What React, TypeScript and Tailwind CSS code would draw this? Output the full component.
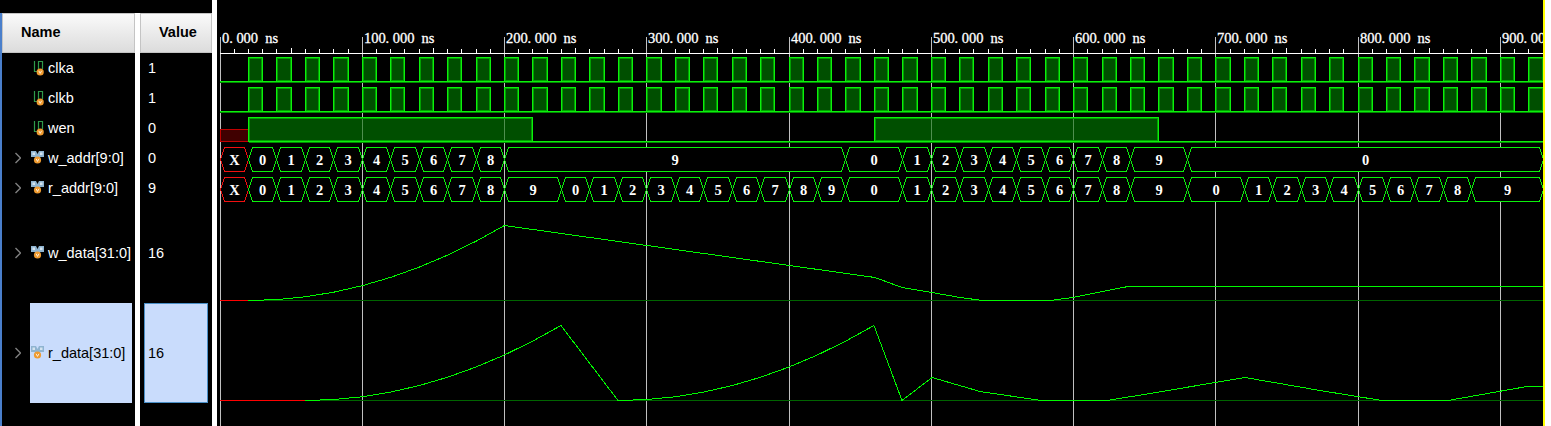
import React from 'react';

const X0 = 220;
const NS = 1.4226;
const END = 1560;
const GREEN = '#0cf00c';
const GLOW = '#008c00';
const TRACE = '#00f800';
const BASE = '#006400';
const PITCH = 7.2;

const px = (ns: number) => Math.floor(X0 + NS * ns) + 0.5;

interface Row {
  name: string;
  value: string;
  bus?: boolean;
  height: string;
  selected?: boolean;
}

const rows: Row[] = [
  { name: 'clka', value: '1', height: 'h-[30px]' },
  { name: 'clkb', value: '1', height: 'h-[30px]' },
  { name: 'wen', value: '0', height: 'h-[30px]' },
  { name: 'w_addr[9:0]', value: '0', bus: true, height: 'h-[30px]' },
  { name: 'r_addr[9:0]', value: '9', bus: true, height: 'h-[30px]' },
  { name: 'w_data[31:0]', value: '16', bus: true, height: 'h-[100px]' },
  { name: 'r_data[31:0]', value: '16', bus: true, height: 'h-[100px]', selected: true },
];

type Seg = [string, number, number];

const seq = (start: number, from: number, count: number): Seg[] =>
  Array.from({ length: count }, (_, i) => [String((from + i) % 10), start + i * 20, start + (i + 1) * 20] as Seg);

const wAddr: Seg[] = [
  ['X', 0, 20],
  ...seq(20, 0, 9),
  ['9', 200, 440],
  ['0', 440, 480],
  ...seq(480, 1, 8),
  ['9', 640, 680],
  ['0', 680, 930],
];

const rAddr: Seg[] = [
  ['X', 0, 20],
  ...seq(20, 0, 9),
  ['9', 200, 240],
  ...seq(240, 0, 10),
  ['0', 440, 480],
  ...seq(480, 1, 8),
  ['9', 640, 680],
  ['0', 680, 720],
  ...seq(720, 1, 8),
  ['9', 880, 930],
];

const curve = (startX: number, base: number) =>
  Array.from({ length: 10 }, (_, n) => `${startX + 28.44 * n},${base - 0.926 * n * n}`).join(' ');

const wData = `${curve(248.5, 300.5)} 875,277.5 902,287.5 932,292.5 960,297.5 983,300.5 1050,300.5 1073,297.5 1128,286.5 1543,286.5`;
const rData = `${curve(305, 400.5)} 618,400.5 ${curve(618, 400.5).split(' ').slice(1).join(' ')} 902,400.5 932,377.5 980,391.5 1041,400.5 1107,400.5 1150,393.5 1245,377.5 1320,390.5 1382,400.5 1448,400.5 1527,386.5 1543,386.5`;

function Chevron() {
  return (
    <svg width="6" height="12" viewBox="0 0 6 12" className="shrink-0">
      <path d="M0.5 1 L5.5 6 L0.5 11" fill="none" stroke="#808080" strokeWidth="1.4" />
    </svg>
  );
}

function ScalarIcon() {
  return (
    <svg width="13" height="16" viewBox="0 0 13 16" className="shrink-0">
      <path d="M2.5 1 V11.5 H6 M6.5 11 V1.5 H10.5 V9" fill="none" stroke="#2f9a4a" strokeWidth="1.2" />
      <circle cx="8.2" cy="12" r="3.6" fill="#ef9a2e" />
      <path d="M6.8 10.8 L8.2 13.4 L9.6 10.8" fill="none" stroke="#ffffff" strokeWidth="0.8" />
    </svg>
  );
}

function BusIcon() {
  return (
    <svg width="13" height="16" viewBox="0 0 13 16" className="shrink-0">
      <path d="M0 1 H5 L6.5 4 L8 1 H13 V7 H9.5 L6.5 10 L3.5 7 H0 Z" fill="#8fb4d0" />
      <path d="M1.5 2.5 H4 V5 H1.5 Z M9 2.5 H11.5 V5 H9 Z" fill="#d5e4ef" />
      <circle cx="6.5" cy="10" r="3.6" fill="#ef9a2e" />
      <path d="M5.1 8.8 L6.5 11.4 L7.9 8.8" fill="none" stroke="#ffffff" strokeWidth="0.8" />
    </svg>
  );
}

function Pulse({ x0, x1, top, bottom }: { x0: number; x1: number; top: number; bottom: number }) {
  return (
    <g>
      <rect x={x0 + 1} y={top + 1} width={x1 - x0 - 2} height={bottom - top - 2} fill="#004f00" stroke="#00a000" />
      <path d={`M${x0} ${bottom} V${top} H${x1} V${bottom}`} fill="none" stroke={GREEN} />
    </g>
  );
}

function LowLine({ x, y }: { x: number; y: number }) {
  return (
    <g>
      <line x1={x} x2={END} y1={y + 1} y2={y + 1} stroke={GLOW} />
      <line x1={x} x2={END} y1={y} y2={y} stroke={GREEN} />
    </g>
  );
}

function Bus({ segs, top, bottom }: { segs: Seg[]; top: number; bottom: number }) {
  const mid = (top + bottom) / 2;
  return (
    <g>
      {segs.map(([label, a, b]) => {
        const l = px(a);
        const r = px(b);
        const isX = label === 'X';
        const clipped = Math.min(r, 1546);
        return (
          <g key={`${top}-${a}`}>
            <path
              d={`M${l} ${mid} L${l + 4} ${top} H${clipped - 4} L${clipped} ${mid} L${clipped - 4} ${bottom} H${l + 4} Z`}
              fill="#000000"
              stroke={isX ? '#f01010' : GREEN}
            />
            <text
              x={(l + clipped) / 2}
              y={mid + 5}
              textAnchor="middle"
              fill="#ffffff"
              fontSize="14.5"
              fontWeight="700"
              fontFamily="'Liberation Serif', serif"
            >
              {label}
            </text>
          </g>
        );
      })}
    </g>
  );
}

function RulerLabel({ ns }: { ns: number }) {
  const label = `${ns.toFixed(3)} ns`;
  const start = px(ns) + 1.5;
  const xs = Array.from(label, (_, i) => (start + i * PITCH).toFixed(1)).join(' ');
  return (
    <text
      x={xs}
      y={43}
      fill="#ffffff"
      stroke="#ffffff"
      strokeWidth="0.3"
      fontSize="14.5"
      fontFamily="'Liberation Serif', serif"
    >
      {label}
    </text>
  );
}

function Waves() {
  const grid = Array.from({ length: 10 }, (_, i) => i * 100);
  const ticks = Array.from({ length: 94 }, (_, i) => i * 10);
  const pulses = Array.from({ length: 46 }, (_, i) => 20 + i * 20);

  return (
    <svg width="1328" height="426" viewBox="217 0 1328 426" className="block shrink-0 bg-black" shapeRendering="crispEdges">
      {grid.map((ns) => (
        <line key={ns} x1={px(ns)} x2={px(ns)} y1={37} y2={426} stroke="#c0c0c0" />
      ))}

      <line x1={220} x2={1543} y1={53.5} y2={53.5} stroke="#ffffff" />
      {ticks.filter((ns) => ns % 100 !== 0).map((ns) => (
        <line key={ns} x1={px(ns)} x2={px(ns)} y1={ns % 50 === 0 ? 48 : 49} y2={53} stroke="#ffffff" />
      ))}
      {grid.map((ns) => (
        <RulerLabel key={ns} ns={ns} />
      ))}

      <LowLine x={220} y={81.5} />
      <LowLine x={220} y={111.5} />
      {pulses.map((ns) => (
        <g key={ns}>
          <Pulse x0={px(ns)} x1={px(ns + 10)} top={57.5} bottom={81.5} />
          <Pulse x0={px(ns)} x1={px(ns + 10)} top={87.5} bottom={111.5} />
        </g>
      ))}

      <rect x={220.5} y={129.5} width={28} height={12} fill="#400000" stroke="#c00000" />
      <LowLine x={px(20)} y={141.5} />
      <Pulse x0={px(20)} x1={px(220)} top={117.5} bottom={141.5} />
      <Pulse x0={px(460)} x1={px(660)} top={117.5} bottom={141.5} />
      {[100, 200, 500, 600].map((ns) => (
        <line key={ns} x1={px(ns)} x2={px(ns)} y1={119} y2={140} stroke="#4f8f4f" />
      ))}

      <Bus segs={wAddr} top={147.5} bottom={171.5} />
      <Bus segs={rAddr} top={177.5} bottom={201.5} />

      <line x1={248} x2={1543} y1={300.5} y2={300.5} stroke={BASE} />
      <line x1={220} x2={248} y1={300.5} y2={300.5} stroke="#ff0000" />
      <polyline points={wData} fill="none" stroke={TRACE} />

      <line x1={305} x2={1543} y1={400.5} y2={400.5} stroke={BASE} />
      <line x1={220} x2={305} y1={400.5} y2={400.5} stroke="#ff0000" />
      <polyline points={rData} fill="none" stroke={TRACE} />

      <rect x={1543} y={0} width={2} height={426} fill="#ffff00" />
    </svg>
  );
}

function HeaderCell({ label, className }: { label: string; className: string }) {
  return (
    <div
      className={`flex h-[40px] items-center border border-[#c4c4c4] bg-gradient-to-b from-[#fafafa] to-[#dcdcdc] text-[14.5px] font-bold text-black ${className}`}
    >
      {label}
    </div>
  );
}

export default function App() {
  return (
    <div className="flex h-[426px] w-full overflow-hidden bg-white font-['Liberation_Sans',sans-serif]">
      <div className="flex w-[212px] shrink-0 bg-black pt-[13px]">
        <div className="w-[2px] shrink-0 bg-[#4a7fcb]" />

        <div className="w-[133px] shrink-0">
          <HeaderCell label="Name" className="pl-[18px]" />
          {rows.map((row) => (
            <div key={row.name} className={`flex items-center pl-[13px] text-[14.5px] ${row.height}`}>
              <div className="w-[6px] shrink-0">{row.bus && <Chevron />}</div>
              <div className={`ml-[9px] flex h-full w-[102px] items-center pl-px ${row.selected ? 'bg-[#c9dcfc] text-black' : 'text-white'}`}>
                <div className={row.bus ? '' : 'ml-[1px]'}>{row.bus ? <BusIcon /> : <ScalarIcon />}</div>
                <span className={`whitespace-nowrap pt-[2px] ${row.bus ? 'ml-[4px]' : 'ml-[3px]'}`}>{row.name}</span>
              </div>
            </div>
          ))}
        </div>

        <div className="w-[5px] shrink-0 bg-white" />

        <div className="w-[72px] shrink-0">
          <HeaderCell label="Value" className="pl-[18px]" />
          {rows.map((row) => (
            <div key={row.name} className={`flex items-center text-[14.5px] ${row.height}`}>
              {row.selected ? (
                <div className="ml-[4px] flex h-full w-[64px] items-center border border-[#4a90c8] bg-[#c9dcfc] pl-[3px] pt-[2px] text-black">
                  {row.value}
                </div>
              ) : (
                <span className="pl-[8px] pt-[2px] text-white">{row.value}</span>
              )}
            </div>
          ))}
        </div>
      </div>

      <div className="w-[5px] shrink-0 bg-white" />
      <Waves />
    </div>
  );
}
